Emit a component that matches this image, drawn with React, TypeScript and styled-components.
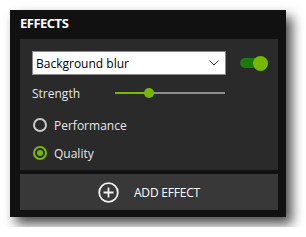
import React, { useState } from 'react';
import styled, { createGlobalStyle } from 'styled-components';

const GlobalStyle = createGlobalStyle`
  html, body {
    margin: 0;
    padding: 0;
    background: #ffffff;
  }
  body {
    font-family: "Open Sans", "Noto Sans", sans-serif;
  }
`;

const Page = styled.div`
  padding: 10px;
`;

const Panel = styled.section`
  width: 276px;
  box-sizing: border-box;
  background: #111111;
  padding: 0 8px 7px 10px;
  box-shadow: 6px 7px 11px rgba(0, 0, 0, 0.7);
`;

const Title = styled.h2`
  margin: 0;
  height: 29px;
  line-height: 27px;
  font-size: 13px;
  font-weight: 700;
  color: #ffffff;
  letter-spacing: -0.5px;
`;

const Card = styled.div`
  background: #2a2a2a;
  padding: 12px 10px 0 12px;
  height: 131px;
  box-sizing: border-box;
`;

const SelectRow = styled.div`
  display: flex;
  align-items: center;
  justify-content: space-between;
`;

const Select = styled.div`
  width: 194px;
  height: 24px;
  box-sizing: border-box;
  background: #ffffff;
  border: 1px solid #8a8a8a;
  display: flex;
  align-items: center;
  justify-content: space-between;
  padding: 0 6px 0 3px;
  font-size: 12px;
  color: #000000;
`;

const Toggle = styled.button<{ $on: boolean }>`
  position: relative;
  width: 28px;
  height: 14px;
  padding: 0;
  border: none;
  background: transparent;
  cursor: pointer;

  &::before {
    content: '';
    position: absolute;
    left: 0;
    top: 2px;
    width: 24px;
    height: 10px;
    border-radius: 5px;
    background: ${p => (p.$on ? '#1b7a0c' : '#555555')};
  }

  &::after {
    content: '';
    position: absolute;
    top: 0;
    left: ${p => (p.$on ? '13px' : '0')};
    width: 15px;
    height: 15px;
    border-radius: 50%;
    background: ${p => (p.$on ? '#76b900' : '#bbbbbb')};
  }
`;

const SliderRow = styled.div`
  display: flex;
  align-items: center;
  margin-top: 9px;
  height: 18px;
`;

const Label = styled.span`
  width: 83px;
  font-size: 12px;
  color: #e6e6e6;
`;

const Track = styled.div`
  position: relative;
  width: 110px;
  height: 2px;
  background: #8c8c8c;
`;

const Fill = styled.div`
  height: 100%;
  background: #76b900;
`;

const Thumb = styled.div`
  position: absolute;
  top: -4px;
  width: 10px;
  height: 10px;
  margin-left: -5px;
  border-radius: 50%;
  background: #76b900;
`;

const RadioGroup = styled.div`
  display: flex;
  flex-direction: column;
  gap: 12px;
  margin-top: 15px;
`;

const RadioItem = styled.label`
  display: flex;
  align-items: center;
  gap: 7px;
  height: 16px;
  font-size: 12px;
  color: #e6e6e6;
  cursor: pointer;
`;

const RadioDot = styled.span<{ $checked: boolean }>`
  width: 14px;
  height: 14px;
  margin-left: 1px;
  box-sizing: border-box;
  border-radius: 50%;
  border: 2px solid ${p => (p.$checked ? '#76b900' : '#c8c8c8')};
  display: flex;
  align-items: center;
  justify-content: center;

  &::after {
    content: '';
    width: 6px;
    height: 6px;
    border-radius: 50%;
    background: ${p => (p.$checked ? '#76b900' : 'transparent')};
  }
`;

const AddButton = styled.button`
  margin-top: 4px;
  width: 100%;
  height: 36px;
  border: none;
  background: #383838;
  color: #ffffff;
  display: flex;
  align-items: center;
  justify-content: center;
  gap: 15px;
  padding: 0;
  font-family: inherit;
  font-size: 12px;
  letter-spacing: -0.2px;
  cursor: pointer;
`;

const Chevron = () => (
  <svg width="10" height="6" viewBox="0 0 10 6">
    <path d="M0.5 0.5 L5 5 L9.5 0.5" fill="none" stroke="#333" strokeWidth="1" />
  </svg>
);

const PlusCircle = () => (
  <svg width="21" height="21" viewBox="0 0 21 21">
    <circle cx="10.5" cy="10.5" r="9.3" fill="none" stroke="#f0f0f0" strokeWidth="1.8" />
    <path d="M10.5 5.5 V15.5 M5.5 10.5 H15.5" stroke="#f0f0f0" strokeWidth="1.8" />
  </svg>
);

export default function App() {
  const [enabled, setEnabled] = useState(true);
  const [mode, setMode] = useState<'performance' | 'quality'>('quality');
  const strength = 31;

  return (
    <Page>
      <GlobalStyle />
      <Panel>
        <Title>EFFECTS</Title>
        <Card>
          <SelectRow>
            <Select>
              <span>Background blur</span>
              <Chevron />
            </Select>
            <Toggle $on={enabled} onClick={() => setEnabled(!enabled)} />
          </SelectRow>
          <SliderRow>
            <Label>Strength</Label>
            <Track>
              <Fill style={{ width: `${strength}%` }} />
              <Thumb style={{ left: `${strength}%` }} />
            </Track>
          </SliderRow>
          <RadioGroup>
            <RadioItem onClick={() => setMode('performance')}>
              <RadioDot $checked={mode === 'performance'} />
              Performance
            </RadioItem>
            <RadioItem onClick={() => setMode('quality')}>
              <RadioDot $checked={mode === 'quality'} />
              Quality
            </RadioItem>
          </RadioGroup>
        </Card>
        <AddButton>
          <PlusCircle />
          ADD EFFECT
        </AddButton>
      </Panel>
    </Page>
  );
}
